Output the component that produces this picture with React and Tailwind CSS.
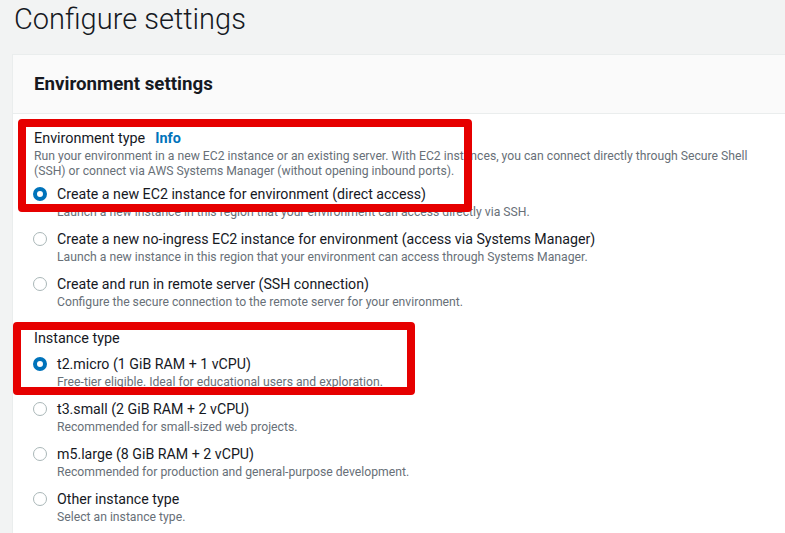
import React from "react";

const envOptions = [
  {
    label: "Create a new EC2 instance for environment (direct access)",
    desc: "Launch a new instance in this region that your environment can access directly via SSH.",
    checked: true,
  },
  {
    label: "Create a new no-ingress EC2 instance for environment (access via Systems Manager)",
    desc: "Launch a new instance in this region that your environment can access through Systems Manager.",
  },
  {
    label: "Create and run in remote server (SSH connection)",
    desc: "Configure the secure connection to the remote server for your environment.",
  },
];

const instanceOptions = [
  {
    label: "t2.micro (1 GiB RAM + 1 vCPU)",
    desc: "Free-tier eligible. Ideal for educational users and exploration.",
    checked: true,
  },
  { label: "t3.small (2 GiB RAM + 2 vCPU)", desc: "Recommended for small-sized web projects." },
  {
    label: "m5.large (8 GiB RAM + 2 vCPU)",
    desc: "Recommended for production and general-purpose development.",
  },
  { label: "Other instance type", desc: "Select an instance type." },
];

const Radio = ({ checked }) => {
  return checked ? (
    <span className="w-[14px] h-[14px] rounded-full border-[4px] border-[#0073bb] bg-white flex-none" />
  ) : (
    <span className="w-[14px] h-[14px] rounded-full border border-[#aab7b8] bg-white flex-none" />
  );
};

const RadioGroup = ({ options }) => {
  return (
    <div className="flex flex-col gap-[9px] mt-[5px] -ml-px">
      {options.map((o, i) => (
        <div key={i} className="h-[36px]">
          <div className="flex items-center gap-[10px] h-[20px]">
            <Radio checked={o.checked} />
            <span className="text-[14.2px] leading-[20px] text-[#16191f] whitespace-nowrap">{o.label}</span>
          </div>
          <div className="pl-[24px] text-[12.2px] leading-[16px] text-[#687078] whitespace-nowrap">
            {o.desc}
          </div>
        </div>
      ))}
    </div>
  );
};

export default function App() {
  return (
    <div
      className="relative w-[785px] h-[533px] overflow-hidden bg-[#f2f3f3]"
      style={{ fontFamily: "Roboto, 'Liberation Sans', sans-serif" }}
    >
      <h1 className="pl-[14px] pt-px text-[29px] leading-[36px] font-light text-[#16191f]">
        Configure settings
      </h1>
      <div className="ml-[12px] mt-[17px] w-[820px] bg-white border-l border-t border-[#eaeded] h-[500px]">
        <div className="h-[59px] bg-[#fafafa] border-b border-[#eaeded] flex items-center pl-[21px]">
          <h2 className="text-[18.7px] font-bold text-[#16191f]">Environment settings</h2>
        </div>
        <div className="px-[21px] pt-[15px]">
          <div className="flex items-center gap-[10px] h-[20px] text-[14.4px]">
            <span className="text-[#16191f]">Environment type</span>
            <span className="font-bold text-[#0073bb]">Info</span>
          </div>
          <p className="text-[12.2px] leading-[15px] text-[#687078] w-[725px]">
            Run your environment in a new EC2 instance or an existing server. With EC2 instances, you can connect
            directly through Secure Shell (SSH) or connect via AWS Systems Manager (without opening inbound ports).
          </p>
          <RadioGroup options={envOptions} />
          <div className="mt-[19px] h-[20px] flex items-center text-[14.4px] text-[#16191f]">Instance type</div>
          <RadioGroup options={instanceOptions} />
        </div>
      </div>
      {/* annotation boxes */}
      <div className="absolute left-[18px] top-[119px] w-[454px] h-[93px] border-[8px] border-[#e60000] rounded-[4px]" />
      <div className="absolute left-[13px] top-[322px] w-[402px] h-[73px] border-[8px] border-[#e60000] rounded-[4px]" />
    </div>
  );
}
